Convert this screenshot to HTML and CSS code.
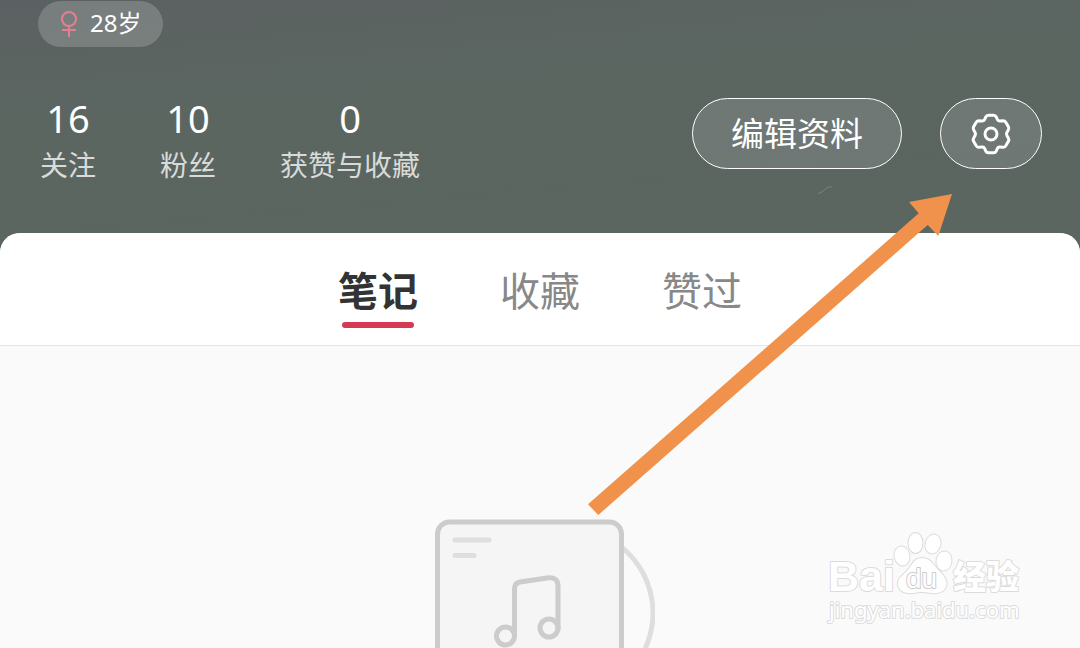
FILE: index.html
```
<!DOCTYPE html>
<html lang="zh-CN">

<head>
    <meta charset="UTF-8">
    <meta name="viewport" content="width=device-width, initial-scale=1.0">
    <title>个人主页</title>
    <link rel="stylesheet" href="styles.css">
</head>

<body>

    <header class="profile">
        <div class="profile__badge">
            <svg class="profile__gender" viewBox="0 0 18 26" aria-hidden="true">
                <circle cx="9" cy="8" r="7" />
                <path d="M9 15V26M2 19H16" />
            </svg>
            <span>28岁</span>
        </div>
        <div class="profile__row">
            <ul class="stats">
                <li class="stats__item"><span class="stats__num">16</span><span class="stats__label">关注</span></li>
                <li class="stats__item"><span class="stats__num">10</span><span class="stats__label">粉丝</span></li>
                <li class="stats__item"><span class="stats__num">0</span><span class="stats__label">获赞与收藏</span></li>
            </ul>
            <div class="profile__actions">
                <button type="button" class="pill pill--edit">编辑资料</button>
                <button type="button" class="pill pill--setting" aria-label="设置">
                    <svg class="pill__icon" viewBox="-20 -20 40 40" aria-hidden="true">
                        <path d="M2.500-18.700Q4.500-18.700 5.300-17L6.300-14.600Q7-13 8.800-13.100L12-13.300Q13.800-13.300 14.800-11.700L17.400-7.200Q18.300-5.600 17.300-4L16-1.700Q15 0 16 1.700L17.300 4Q18.300 5.600 17.400 7.200L14.800 11.700Q13.800 13.300 12 13.300L8.800 13.100Q7 13 6.300 14.600L5.300 17Q4.500 18.700 2.500 18.700L-2.500 18.700Q-4.500 18.700-5.300 17L-6.300 14.600Q-7 13-8.800 13.100L-12 13.300Q-13.800 13.300-14.800 11.700L-17.400 7.200Q-18.300 5.600-17.300 4L-16 1.700Q-15 0-16-1.700L-17.300-4Q-18.300-5.600-17.400-7.200L-14.800-11.700Q-13.800-13.300-12-13.300L-8.800-13.100Q-7-13-6.300-14.600L-5.300-17Q-4.500-18.700-2.500-18.700Z" />
                        <circle r="6" />
                    </svg>
                </button>
            </div>
        </div>
    </header>

    <main class="panel">
        <nav class="tabs">
            <button type="button" class="tabs__item tabs__item--active">笔记</button>
            <button type="button" class="tabs__item">收藏</button>
            <button type="button" class="tabs__item">赞过</button>
        </nav>
        <section class="empty">
            <svg class="empty__img" viewBox="0 0 230 210" aria-hidden="true">
                <circle class="empty__disc" cx="143" cy="94" r="85" />
                <rect class="empty__box" x="12.500" y="3" width="184" height="204" rx="12" />
                <path class="empty__line" d="M30 21H64M30 36.500H49" />
                <path class="empty__note" d="M89.500 116V70Q89.500 64 95 63L122 59Q133 57.500 133 67V110" />
                <circle class="empty__note" cx="80.500" cy="117" r="9" />
                <circle class="empty__note" cx="124" cy="109" r="9" />
            </svg>
        </section>
    </main>

    <!-- 指向設置按鈕的箭頭 -->
    <svg class="arrow" viewBox="0 0 380 330" aria-hidden="true">
        <path class="arrow__scratch" d="M238 4L243 1L248-3L252-3" />
        <path class="arrow__shape" d="M372 4L329 12L338.700 23.300L8 314.300L18.300 325L347.700 35L358.300 46Z" />
    </svg>

    <!-- 浮水印 -->
    <svg class="mark" viewBox="0 0 200 100" role="img" aria-label="Baidu 经验">
        <text class="mark__bai" x="4" y="63">Bai</text>
        <ellipse cx="78" cy="28" rx="7.500" ry="9.500" transform="rotate(-12 78 28)" />
        <ellipse cx="91.500" cy="15" rx="7" ry="10" />
        <ellipse cx="109" cy="16" rx="7.500" ry="9.500" transform="rotate(14 109 16)" />
        <ellipse cx="120" cy="33" rx="7.500" ry="9.500" transform="rotate(8 120 33)" />
        <path d="M98 30Q105 30 110 37Q114 42 119 47Q126 56 120 62Q115 66 107 65Q98 63 89 65Q78 66 75 60Q71 53 80 46Q85 41 88 36Q92 30 98 30Z" />
        <text class="mark__du" x="82" y="60">du</text>
        <text class="mark__jy" x="129" y="61">经验</text>
        <text class="mark__url" x="5" y="90">jingyan.baidu.com</text>
    </svg>

</body>

</html>
```
FILE: styles.css
```
html {
    box-sizing: border-box;
}

*,
*:before,
*:after {
    box-sizing: inherit;
}

body {
    position: relative;
    display: flex;
    flex-direction: column;
    height: 100vh;
    margin: 0;
    overflow: hidden;
    background: #fafafa;
    font-family: 'Noto Sans CJK SC', sans-serif;
}

button {
    margin: 0;
    padding: 0;
    border: 0;
    background: none;
    font-family: inherit;
    cursor: pointer;
}

/* 個人資料 */
.profile {
    padding: 1px 38px 69px;
    color: #fff;
    background: linear-gradient(175deg, #5b6162 0%, #5b6661 35%, #5c6560 100%);
}

.profile__badge {
    display: inline-flex;
    align-items: center;
    gap: 12px;
    height: 46px;
    padding: 0 22px;
    border-radius: 23px;
    background: rgba(255, 255, 255, 0.18);
    font-family: 'Noto Sans', 'Noto Sans CJK SC', sans-serif;
    font-size: 24px;
    line-height: 44px;
}

.profile__badge span {
    padding-bottom: 2px;
}

.profile__gender {
    width: 18px;
    height: 26px;
    fill: none;
    stroke: #e57f8f;
    stroke-width: 2;
}

.profile__row {
    display: flex;
    justify-content: space-between;
    align-items: flex-start;
    margin-top: 51px;
}

.profile__actions {
    display: flex;
    gap: 38px;
}

.stats {
    display: flex;
    gap: 64px;
    margin: 0;
    padding: 0 0 0 2px;
    list-style: none;
}

.stats__item {
    display: flex;
    flex-direction: column;
    align-items: center;
    gap: 6px;
}

.stats__num {
    font-family: 'Noto Sans', sans-serif;
    font-size: 38px;
    line-height: 40px;
}

.stats__label {
    color: #d8dbda;
    font-size: 28px;
    line-height: 40px;
}

.pill {
    display: flex;
    align-items: center;
    justify-content: center;
    height: 71px;
    border: 1px solid #fff;
    border-radius: 36px;
    background: rgba(255, 255, 255, 0.12);
    color: #fff;
    font-size: 33px;
    line-height: 60px;
}

.pill--edit {
    padding: 0 38px 4px;
}

.pill--setting {
    padding: 0 30px;
}

.pill__icon {
    width: 40px;
    height: 40px;
    overflow: visible;
    fill: none;
    stroke: #fff;
    stroke-width: 3;
}

/* 內容 */
.panel {
    display: flex;
    flex: 1;
    flex-direction: column;
    min-height: 0;
    margin-top: -20px;
    border-radius: 20px 20px 0 0;
    background: #fafafa;
    overflow: hidden;
}

.tabs {
    display: flex;
    justify-content: center;
    gap: 82px;
    padding: 28px 0 17px;
    border-bottom: 1px solid #e6e6e6;
    background: #fff;
}

.tabs__item {
    display: flex;
    flex-direction: column;
    align-items: center;
    gap: 5px;
    color: #888;
    font-size: 40px;
    line-height: 56px;
}

.tabs__item:after {
    content: '';
    width: 72px;
    height: 6px;
    border-radius: 3px;
}

.tabs__item--active {
    color: #333;
    font-weight: 700;
}

.tabs__item--active:after {
    background: #d63a53;
}

.empty {
    display: flex;
    flex: 1;
    justify-content: center;
    align-items: flex-start;
    min-height: 0;
    padding-top: 173px;
}

.empty__img {
    flex: none;
    width: 230px;
    height: 210px;
    fill: none;
    stroke: #ccc;
    stroke-width: 5;
    stroke-linecap: round;
}

.empty__box {
    fill: #f5f5f5;
}

.empty__disc {
    stroke: #dedede;
}

.empty__line {
    stroke: #dedede;
}

/* 覆蓋在上層的箭頭與浮水印 */
.arrow {
    position: absolute;
    top: 190px;
    right: 120px;
    width: 380px;
    height: 330px;
    overflow: visible;
    pointer-events: none;
}

.arrow__shape {
    fill: #f0924b;
}

.arrow__scratch {
    fill: none;
    stroke: #7b837f;
}

.mark {
    position: absolute;
    right: 56px;
    bottom: 20px;
    width: 200px;
    height: 100px;
    overflow: visible;
    fill: #fff;
    stroke: #dcdcdc;
    stroke-width: 2;
    stroke-linejoin: round;
    paint-order: stroke;
    pointer-events: none;
}

.mark__bai,
.mark__du {
    font-family: 'Liberation Sans', sans-serif;
    font-size: 43px;
    font-weight: 700;
}

.mark__du {
    font-size: 28px;
    font-weight: 400;
    stroke: #ccc;
}

.mark__jy {
    font-size: 33px;
    font-weight: 900;
}

.mark__url {
    font-family: 'Noto Sans', sans-serif;
    font-size: 22px;
}
```
